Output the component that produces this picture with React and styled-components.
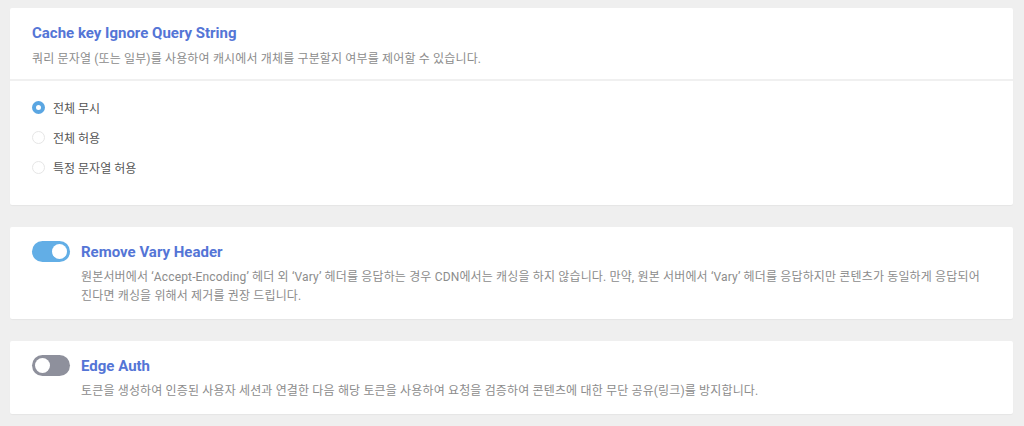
import React, { useState } from "react";
import styled, { createGlobalStyle } from "styled-components";

const GlobalStyle = createGlobalStyle`
  html, body {
    margin: 0;
    padding: 0;
    background: #efefef;
  }
  body {
    font-family: Roboto, "Noto Sans CJK KR", sans-serif;
  }
`;

const Page = styled.div`
  display: flex;
  flex-direction: column;
  gap: 22px;
  padding: 8px 11px 12px 10px;
`;

const Card = styled.section`
  background: #fff;
  border-radius: 2px;
  box-shadow: 0 1px 1px rgba(0, 0, 0, 0.04);
`;

const CardHeader = styled.div`
  padding: 15px 22px 10px;
  border-bottom: 2px solid #f0f0f0;
`;

const Title = styled.h3`
  margin: 0;
  font-size: 15px;
  font-weight: 700;
  line-height: 20px;
  color: #5475d6;
`;

const Desc = styled.p`
  margin: ${(p) => (p.$tight ? "6px 0 0" : "7px 0 0")};
  font-size: 12px;
  line-height: 19px;
  letter-spacing: 0.15px;
  color: #8c8c8c;
  word-break: keep-all;
`;

const RadioList = styled.div`
  display: flex;
  flex-direction: column;
  gap: 10px;
  padding: 16px 22px 28px;
`;

const RadioRow = styled.label`
  display: flex;
  align-items: center;
  gap: 8px;
  height: 20px;
  font-size: 12px;
  color: #555;
  cursor: pointer;
`;

const RadioDot = styled.span`
  width: 13px;
  height: 13px;
  box-sizing: border-box;
  border-radius: 50%;
  border: ${(p) => (p.$on ? "4px solid #5aa6e2" : "1px solid #e6e6e6")};
  background: #fff;
`;

const ToggleRow = styled.div`
  display: flex;
  align-items: flex-start;
  gap: 11px;
  padding: 14px 22px ${(p) => p.$bottom}px;
`;

const Switch = styled.button`
  flex: none;
  width: 38px;
  height: 21px;
  padding: 0;
  border: none;
  border-radius: 11px;
  background: ${(p) => (p.$on ? "#62aee6" : "#8e909c")};
  position: relative;
  cursor: pointer;

  &::after {
    content: "";
    position: absolute;
    top: 3px;
    left: ${(p) => (p.$on ? "20px" : "3px")};
    width: 15px;
    height: 15px;
    border-radius: 50%;
    background: #fff;
  }
`;

const ToggleBody = styled.div`
  flex: 1;
  padding-top: 1px;
`;

const radioOptions = ["전체 무시", "전체 허용", "특정 문자열 허용"];

const App = () => {
  const [selected, setSelected] = useState(0);
  const [vary, setVary] = useState(true);
  const [auth, setAuth] = useState(false);

  return (
    <>
      <GlobalStyle />
      <Page>
        <Card>
          <CardHeader>
            <Title>Cache key Ignore Query String</Title>
            <Desc>
              쿼리 문자열 (또는 일부)를 사용하여 캐시에서 개체를 구분할지 여부를 제어할 수 있습니다.
            </Desc>
          </CardHeader>
          <RadioList>
            {radioOptions.map((label, index) => (
              <RadioRow key={label} onClick={() => setSelected(index)}>
                <RadioDot $on={selected === index} />
                {label}
              </RadioRow>
            ))}
          </RadioList>
        </Card>

        <Card>
          <ToggleRow $bottom={13}>
            <Switch $on={vary} onClick={() => setVary(!vary)} />
            <ToggleBody>
              <Title>Remove Vary Header</Title>
              <Desc $tight>
                원본서버에서 ‘Accept-Encoding’ 헤더 외 ‘Vary’ 헤더를 응답하는 경우 CDN에서는 캐싱을 하지 않습니다. 만약, 원본 서버에서 ‘Vary’ 헤더를 응답하지만 콘텐츠가 동일하게 응답되어 진다면 캐싱을 위해서 제거를 권장 드립니다.
              </Desc>
            </ToggleBody>
          </ToggleRow>
        </Card>

        <Card>
          <ToggleRow $bottom={13}>
            <Switch $on={auth} onClick={() => setAuth(!auth)} />
            <ToggleBody>
              <Title>Edge Auth</Title>
              <Desc $tight>
                토큰을 생성하여 인증된 사용자 세션과 연결한 다음 해당 토큰을 사용하여 요청을 검증하여 콘텐츠에 대한 무단 공유(링크)를 방지합니다.
              </Desc>
            </ToggleBody>
          </ToggleRow>
        </Card>
      </Page>
    </>
  );
};

export default App;
